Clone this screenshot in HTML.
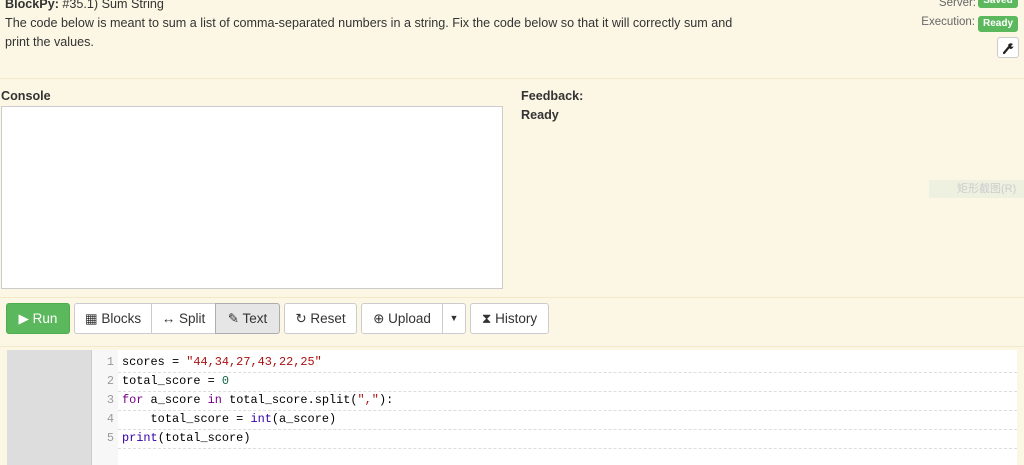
<!DOCTYPE html><html><head><style>
body{margin:0;width:1024px;height:465px;background:#fcf7e4;font-family:"Liberation Sans",Arial,sans-serif;color:#333;position:relative;overflow:hidden;font-size:12.6px}
.a{position:absolute}
.btn{position:absolute;top:303px;height:31px;box-sizing:border-box;border:1px solid #ccc;background:#fff;border-radius:3px;font-size:13.5px;line-height:29px;text-align:center;color:#333}
.code{font-family:"Liberation Mono",monospace;font-size:11.9px;color:#000}
.ln{position:absolute;left:90px;width:24px;text-align:right;color:#999;line-height:19px}
.row{position:absolute;left:118px;right:7px;height:19px;border-bottom:1px dashed #ddd;line-height:19px;padding-left:4px;white-space:pre}
</style></head><body>
<div class="a" style="left:5px;top:-3px"><b>BlockPy:</b> #35.1) Sum String</div>
<div class="a" style="left:5px;top:14px;width:748px;line-height:19px">The code below is meant to sum a list of comma-separated numbers in a string. Fix the code below so that it will correctly sum and print the values.</div>
<div class="a" style="right:48px;top:-3px;color:#666;font-size:11.5px">Server:</div>
<div class="a" style="left:978px;top:-5px;width:40px;height:13px;background:#5cb85c;border-radius:3px;color:#fff;font-size:10px;font-weight:bold;text-align:center;line-height:12px">Saved</div>
<div class="a" style="right:49px;top:16px;color:#666;font-size:11.5px">Execution:</div>
<div class="a" style="left:978px;top:16px;width:40px;height:16px;background:#5cb85c;border-radius:3px;color:#fff;font-size:10px;font-weight:bold;text-align:center;line-height:16px">Ready</div>
<div class="a" style="left:997px;top:37px;width:20px;height:19px;background:#fff;border:1px solid #ccc;border-radius:3px;text-align:center"><svg width="14" height="14" viewBox="0 0 14 14" style="margin-top:3px"><path d="M3 12 L8 6" stroke="#222" stroke-width="2.2" stroke-linecap="round"/><path d="M7 4 Q9 1 12 3 L10 5 L11 6 L12.5 5 Q12 8 9 8 Z" fill="#222"/></svg></div>
<div class="a" style="left:0;right:0;top:78px;border-top:1px solid #f3e8c8"></div>
<div class="a" style="left:1px;top:89px;font-weight:bold">Console</div>
<div class="a" style="left:1px;top:106px;width:502px;height:183px;box-sizing:border-box;background:#fff;border:1px solid #ccc"></div>
<div class="a" style="left:521px;top:89px;font-weight:bold">Feedback:</div>
<div class="a" style="left:521px;top:108px;font-weight:bold">Ready</div>
<div class="a" style="left:929px;top:180px;width:95px;height:18px;background:#eef1e0;color:#ccc;font-size:11px;line-height:18px;padding-left:28px;box-sizing:border-box">矩形截图(R)</div>
<div class="a" style="left:0;right:0;top:297px;border-top:1px solid #f3e8c8"></div>
<div class="btn" style="left:6px;width:64px;background:#5cb85c;border-color:#4cae4c;color:#fff">▶ Run</div>
<div class="btn" style="left:74px;width:78px;border-radius:3px 0 0 3px">▦ Blocks</div>
<div class="btn" style="left:151px;width:65px;border-radius:0">↔ Split</div>
<div class="btn" style="left:215px;width:65px;background:#e6e6e6;border-color:#adadad;border-radius:0 3px 3px 0">✎ Text</div>
<div class="btn" style="left:284px;width:73px">↻ Reset</div>
<div class="btn" style="left:361px;width:82px;border-radius:3px 0 0 3px">⊕ Upload</div>
<div class="btn" style="left:442px;width:24px;border-radius:0 3px 3px 0;font-size:9px">▼</div>
<div class="btn" style="left:470px;width:79px">⧗ History</div>
<div class="a" style="left:0;right:0;top:346px;border-top:1px solid #f3e8c8"></div>
<div class="a" style="left:7px;top:350px;width:84px;height:115px;background:#ddd;border-right:1px solid #ccc"></div>
<div class="a" style="left:92px;top:350px;width:26px;height:115px;background:#f7f7f7"></div>
<div class="a" style="left:118px;top:350px;right:7px;height:115px;background:#fff"></div>
<div class="code">
<div class="ln" style="top:353px">1</div><div class="row" style="top:353px">scores = <span style="color:#a11">"44,34,27,43,22,25"</span></div>
<div class="ln" style="top:372px">2</div><div class="row" style="top:372px">total_score = <span style="color:#164">0</span></div>
<div class="ln" style="top:391px">3</div><div class="row" style="top:391px"><span style="color:#708">for</span> a_score <span style="color:#708">in</span> total_score.split(<span style="color:#a11">","</span>):</div>
<div class="ln" style="top:410px">4</div><div class="row" style="top:410px">    total_score = <span style="color:#30a">int</span>(a_score)</div>
<div class="ln" style="top:429px">5</div><div class="row" style="top:429px"><span style="color:#30a">print</span>(total_score)</div>
</div>
</body></html>
